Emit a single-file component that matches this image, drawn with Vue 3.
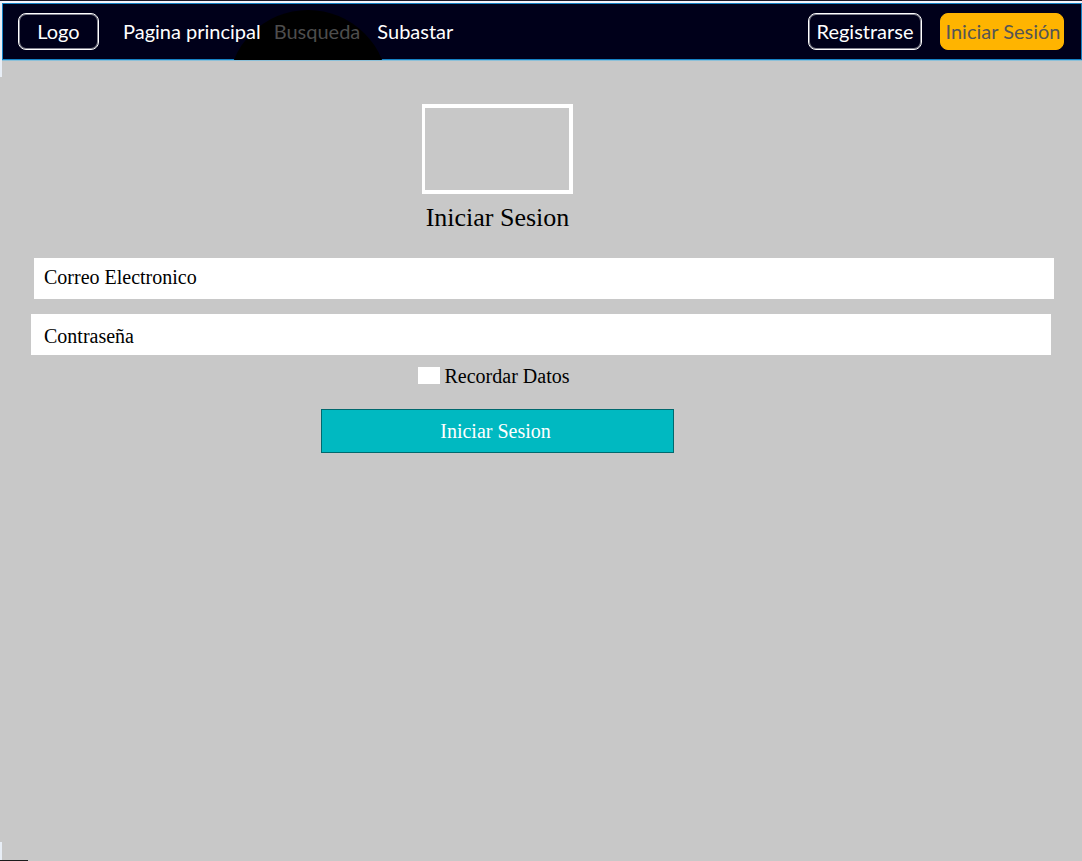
<script setup>
import { ref } from 'vue'

const email = ref('')
const password = ref('')
const remember = ref(false)
</script>

<template>
  <div class="page">
    <header class="bar">
      <span class="ripple" aria-hidden="true"></span>
      <a href="#" class="pill logo">Logo</a>
      <nav class="links">
        <a href="#">Pagina principal</a>
        <a href="#" class="muted">Busqueda</a>
        <a href="#" class="last">Subastar</a>
      </nav>
      <div class="actions">
        <button type="button" class="pill register">Registrarse</button>
        <button type="button" class="pill login">Iniciar Sesión</button>
      </div>
    </header>

    <main class="content">
      <form @submit.prevent>
        <div class="picture"></div>
        <h1>Iniciar Sesion</h1>
        <input v-model="email" class="field email" type="email" placeholder="Correo Electronico" aria-label="Correo Electronico" />
        <input v-model="password" class="field password" type="password" placeholder="Contraseña" aria-label="Contraseña" />
        <label class="remember">
          <input v-model="remember" type="checkbox" />
          <span>Recordar Datos</span>
        </label>
        <button type="submit" class="submit">Iniciar Sesion</button>
      </form>
    </main>
    <span class="edge top" aria-hidden="true"></span>
    <span class="edge bottom" aria-hidden="true"></span>
    <span class="corner" aria-hidden="true"></span>
  </div>
</template>

<style>
body {
  margin: 0;
  background: #c8c8c8;
}
</style>

<style scoped>
.page {
  position: relative;
  box-sizing: border-box;
  min-height: 100vh;
  border-top: 1px solid #1c1a28;
  background: #c8c8c8;
  color: #000;
  font-family: "Palatino Linotype", Palatino, "Book Antiqua", "Liberation Serif", serif;
}

.bar {
  position: relative;
  box-sizing: border-box;
  display: flex;
  align-items: center;
  height: 59px;
  margin-left: 2px;
  padding: 0 18px 0 16px;
  overflow: hidden;
  background: #00001a;
  border-top: 2px solid #f4f4fa;
  box-shadow: inset 0 0 0 1px #1682c4, 0 1px 0 #8cc0d8;
  font-family: Lato, sans-serif;
  font-size: 20px;
  line-height: 24px;
}

.bar > * {
  position: relative;
}

.bar .ripple {
  position: absolute;
  left: 226px;
  top: 7px;
  width: 160px;
  height: 160px;
  border-radius: 50%;
  background: #000;
}

.bar a {
  color: #fff;
  text-decoration: none;
}

.pill {
  box-sizing: border-box;
  height: 37px;
  padding: 0 0 2px;
  border: 1px solid #fff;
  border-radius: 8px;
  box-shadow: inset 0 0 0 1px rgba(255, 255, 255, 0.5);
  background: transparent;
  color: #fff;
  font: inherit;
  line-height: 34px;
  text-align: center;
  white-space: nowrap;
}

.logo {
  width: 81px;
}

.links {
  display: flex;
  gap: 13px;
  margin-left: 24px;
  padding-bottom: 2px;
}

.links .muted {
  color: #4d4d4d;
}

.links .last {
  margin-left: 4px;
}

.actions {
  display: flex;
  gap: 18px;
  margin-left: auto;
}

.register {
  width: 114px;
}

.login {
  width: 124px;
  padding-left: 2px;
  border-color: #ffb400;
  box-shadow: none;
  background: #ffb400;
  color: #555;
}

.content {
  padding: 44px 28px 0 31px;
}

form {
  display: flex;
  flex-direction: column;
}

.picture {
  box-sizing: border-box;
  width: 151px;
  height: 90px;
  border: 4px solid #fff;
  border-left-width: 3px;
}

.picture,
h1,
.submit {
  align-self: center;
  margin-right: 90px;
}

h1 {
  margin-top: 8px;
  margin-bottom: 24px;
  font-size: 26px;
  font-weight: 400;
  line-height: 32px;
}

.field {
  box-sizing: border-box;
  height: 41px;
  border: 0;
  border-radius: 0;
  outline: 0;
  background: #fff;
  color: #000;
  font-family: inherit;
  font-size: 20px;
}

.field::placeholder {
  color: #000;
  opacity: 1;
}

.email {
  margin-left: 3px;
  margin-bottom: 15px;
  padding: 0 10px 2px;
}

.password {
  margin-right: 3px;
  padding: 4px 13px 0;
}

.remember {
  display: flex;
  align-items: center;
  align-self: center;
  gap: 5px;
  height: 24px;
  margin-top: 9px;
  margin-right: 98px;
  font-size: 20px;
  line-height: 24px;
}

.remember input {
  appearance: none;
  width: 22px;
  height: 17px;
  margin: 0 0 2px;
  background: #fff;
}

.remember input:checked {
  background: #00b9c1;
}

.submit {
  box-sizing: border-box;
  width: 353px;
  height: 44px;
  margin-top: 21px;
  padding: 0 4px 0 0;
  border: 1px solid #00696e;
  background: #00b9c1;
  color: #fff;
  font-family: inherit;
  font-size: 20px;
}

.edge {
  position: absolute;
  left: 0;
  width: 2px;
  background: #e8eef6;
}

.edge.top {
  top: 0;
  height: 76px;
}

.edge.bottom {
  bottom: 0;
  height: 19px;
}

.corner {
  position: absolute;
  left: 0;
  bottom: 0;
  width: 28px;
  height: 1px;
  background: #1c1c1c;
}
</style>
